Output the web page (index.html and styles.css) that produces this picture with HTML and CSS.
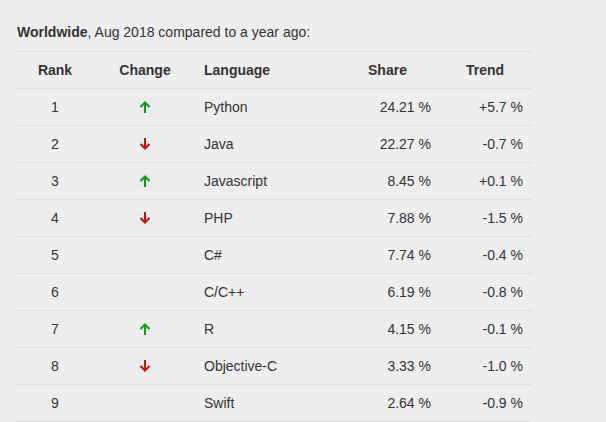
FILE: index.html
```html
<!DOCTYPE html>
<html>
<head>
<meta charset="utf-8">
<link rel="stylesheet" href="styles.css">
</head>
<body>
<div class="page">
  <p class="title"><b>Worldwide</b>, Aug 2018 compared to a year ago:</p>
  <table class="rank-table">
    <colgroup>
      <col class="c-rank"><col class="c-change"><col class="c-lang"><col class="c-share"><col class="c-trend">
    </colgroup>
    <thead>
      <tr><th>Rank</th><th>Change</th><th class="left">Language</th><th>Share</th><th>Trend</th></tr>
    </thead>
    <tbody>
      <tr><td class="center">1</td><td class="center"><svg class="arrow up" width="14" height="14" viewBox="0 0 14 14"><rect width="14" height="14" fill="#e7ecec"/><path d="M7 13V2.5M2.5 7L7 2.5L11.5 7" fill="none" stroke="#139a13" stroke-width="2"/></svg></td><td>Python</td><td class="right">24.21 %</td><td class="right">+5.7 %</td></tr>
      <tr><td class="center">2</td><td class="center"><svg class="arrow down" width="14" height="14" viewBox="0 0 14 14"><rect width="14" height="14" fill="#e7ecec"/><path d="M7 1V11.5M2.5 7L7 11.5L11.5 7" fill="none" stroke="#cc1010" stroke-width="2"/></svg></td><td>Java</td><td class="right">22.27 %</td><td class="right">-0.7 %</td></tr>
      <tr><td class="center">3</td><td class="center"><svg class="arrow up" width="14" height="14" viewBox="0 0 14 14"><rect width="14" height="14" fill="#e7ecec"/><path d="M7 13V2.5M2.5 7L7 2.5L11.5 7" fill="none" stroke="#139a13" stroke-width="2"/></svg></td><td>Javascript</td><td class="right">8.45 %</td><td class="right">+0.1 %</td></tr>
      <tr><td class="center">4</td><td class="center"><svg class="arrow down" width="14" height="14" viewBox="0 0 14 14"><rect width="14" height="14" fill="#e7ecec"/><path d="M7 1V11.5M2.5 7L7 11.5L11.5 7" fill="none" stroke="#cc1010" stroke-width="2"/></svg></td><td>PHP</td><td class="right">7.88 %</td><td class="right">-1.5 %</td></tr>
      <tr><td class="center">5</td><td></td><td>C#</td><td class="right">7.74 %</td><td class="right">-0.4 %</td></tr>
      <tr><td class="center">6</td><td></td><td>C/C++</td><td class="right">6.19 %</td><td class="right">-0.8 %</td></tr>
      <tr><td class="center">7</td><td class="center"><svg class="arrow up" width="14" height="14" viewBox="0 0 14 14"><rect width="14" height="14" fill="#e7ecec"/><path d="M7 13V2.5M2.5 7L7 2.5L11.5 7" fill="none" stroke="#139a13" stroke-width="2"/></svg></td><td>R</td><td class="right">4.15 %</td><td class="right">-0.1 %</td></tr>
      <tr><td class="center">8</td><td class="center"><svg class="arrow down" width="14" height="14" viewBox="0 0 14 14"><rect width="14" height="14" fill="#e7ecec"/><path d="M7 1V11.5M2.5 7L7 11.5L11.5 7" fill="none" stroke="#cc1010" stroke-width="2"/></svg></td><td>Objective-C</td><td class="right">3.33 %</td><td class="right">-1.0 %</td></tr>
      <tr><td class="center">9</td><td></td><td>Swift</td><td class="right">2.64 %</td><td class="right">-0.9 %</td></tr>
    </tbody>
  </table>
</div>
</body>
</html>
```
FILE: styles.css
```css
html, body {
  margin: 0;
  padding: 0;
  background: #eeeeee;
}
body {
  font-family: "Liberation Sans", Arial, sans-serif;
  font-size: 14px;
  color: #333333;
}
.page {
  padding: 24px 0 0 16px;
}
.title {
  margin: 0 0 11px 1px;
  line-height: 16px;
}
.title b {
  font-weight: bold;
}
.rank-table {
  border-collapse: collapse;
  table-layout: fixed;
  width: 515px;
}
.c-rank { width: 78px; }
.c-change { width: 102px; }
.c-lang { width: 140px; }
.c-share { width: 103px; }
.c-trend { width: 92px; }
.rank-table th,
.rank-table td {
  padding: 10px 8px;
  line-height: 16px;
  border-top: 1px solid #dddddd;
  text-align: left;
  vertical-align: middle;
}
.rank-table th {
  font-weight: bold;
  text-align: center;
}
.rank-table th.left {
  text-align: left;
}
.rank-table tbody tr:last-child td {
  border-bottom: 1px solid #dddddd;
}
.rank-table td.center { text-align: center; }
.rank-table td.right { text-align: right; }
.arrow {
  display: block;
  margin: 0 auto;
}
```
